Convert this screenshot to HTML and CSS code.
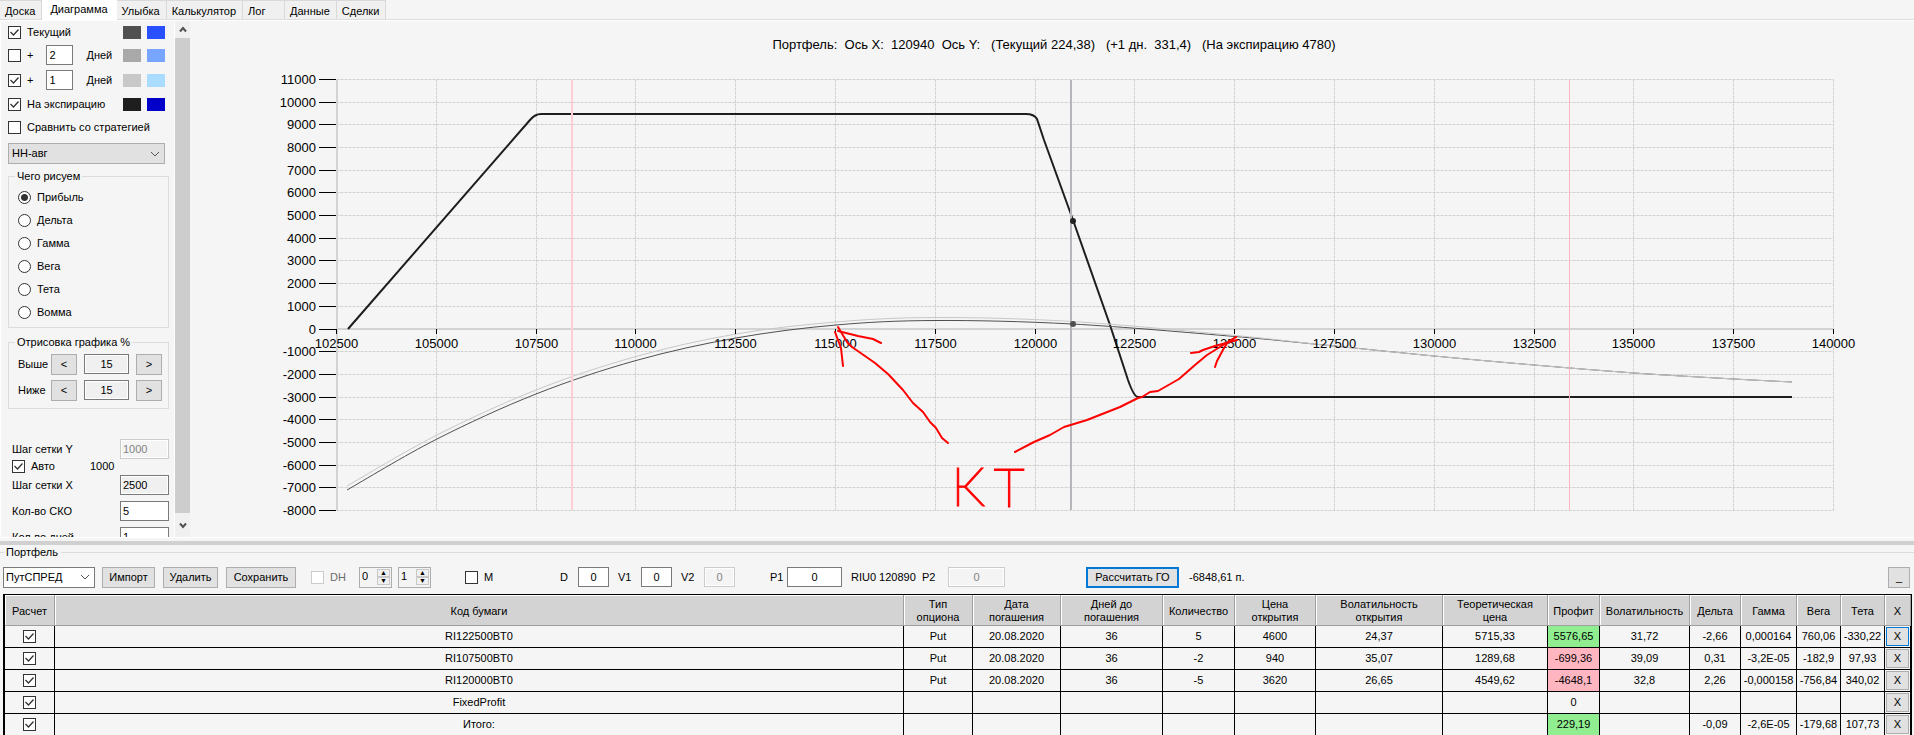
FILE: index.html
```html
<!DOCTYPE html>
<html lang="ru">
<head>
    <meta charset="UTF-8">
    <meta name="viewport" content="width=device-width, initial-scale=1.0">
    <title>Портфель опционов</title>
    <link rel="stylesheet" href="styles.css">
</head>
<body>
    <nav class="tabs">
        <button class="tab">Доска</button>
        <button class="tab active">Диаграмма</button>
        <button class="tab">Улыбка</button>
        <button class="tab">Калькулятор</button>
        <button class="tab tab-log">Лог</button>
        <button class="tab">Данные</button>
        <button class="tab">Сделки</button>
    </nav>

    <main class="workspace">
        <aside class="sidebar">
            <div class="line-row">
                <label><input type="checkbox" checked>Текущий</label>
                <span class="swatch dark1"></span><span class="swatch blue1"></span>
            </div>
            <div class="line-row tall">
                <label><input type="checkbox">+</label>
                <input type="text" class="days" id="days1" value="2">
                <label for="days1">Дней</label>
                <span class="swatch dark2"></span><span class="swatch blue2"></span>
            </div>
            <div class="line-row tall">
                <label><input type="checkbox" checked>+</label>
                <input type="text" class="days" id="days2" value="1">
                <label for="days2">Дней</label>
                <span class="swatch dark3"></span><span class="swatch blue3"></span>
            </div>
            <div class="line-row">
                <label><input type="checkbox" checked>На экспирацию</label>
                <span class="swatch dark4"></span><span class="swatch blue4"></span>
            </div>
            <div class="line-row">
                <label><input type="checkbox">Сравнить со стратегией</label>
            </div>
            <select class="strategy" aria-label="Стратегия"><option>НН-авг</option></select>

            <fieldset class="group">
                <legend>Чего рисуем</legend>
                <label class="radio-row"><input type="radio" name="what" checked>Прибыль</label>
                <label class="radio-row"><input type="radio" name="what">Дельта</label>
                <label class="radio-row"><input type="radio" name="what">Гамма</label>
                <label class="radio-row"><input type="radio" name="what">Вега</label>
                <label class="radio-row"><input type="radio" name="what">Тета</label>
                <label class="radio-row"><input type="radio" name="what">Вомма</label>
            </fieldset>

            <fieldset class="group range">
                <legend>Отрисовка графика %</legend>
                <div class="range-row">
                    <label for="above">Выше</label>
                    <button>&lt;</button><input type="text" id="above" value="15" readonly><button>&gt;</button>
                </div>
                <div class="range-row">
                    <label for="below">Ниже</label>
                    <button>&lt;</button><input type="text" id="below" value="15" readonly><button>&gt;</button>
                </div>
            </fieldset>

            <div class="steps">
                <label for="stepY">Шаг сетки Y</label><input type="text" id="stepY" value="1000" disabled>
                <label class="auto"><input type="checkbox" checked>Авто</label><span class="auto-value">1000</span>
                <label for="stepX">Шаг сетки X</label><input type="text" id="stepX" value="2500" readonly>
                <label for="sko">Кол-во СКО</label><input type="text" id="sko" value="5">
                <label for="dayCount">Кол-во дней</label><input type="text" id="dayCount" value="1">
            </div>
        </aside>

        <div class="scrollbar">
            <button aria-label="Вверх"><svg width="8" height="7" viewBox="0 0 8 7"><path d="M1 5.500l3-3.500 3 3.500"/></svg></button>
            <div class="thumb"></div>
            <button aria-label="Вниз"><svg width="8" height="7" viewBox="0 0 8 7"><path d="M1 1.500l3 3.500 3-3.500"/></svg></button>
        </div>

        <svg class="chart" viewBox="190 21 1724 516" preserveAspectRatio="xMidYMid meet">
            <text class="title" x="1054" y="49" text-anchor="middle">Портфель:&#160; Ось X:&#160; 120940&#160; Ось Y:&#160;&#160; (Текущий 224,38)&#160;&#160; (+1 дн.&#160; 331,4)&#160;&#160; (На экспирацию 4780)</text>
            <g id="grid"></g>
            <path class="expiry" d="M348 329L530 120Q535 114 541 114H1026Q1034 114 1037 119L1044 140L1073 220L1110 325L1128 380Q1134 397 1138 397H1792"/>
            <path class="current" id="current"/>
            <path class="plus" id="plus"/>
            <path class="sigma wide" d="M572 80V510"/>
            <path class="sigma" d="M1569.500 80V510"/>
            <path class="cursor" d="M1071 80V510"/>
            <circle class="dot" cx="1073" cy="221" r="3"/>
            <circle class="dot grey" cx="1073" cy="324" r="3"/>
            <g id="labels"></g>
            <!-- pencil marks -->
            <g class="pencil">
                <path d="M948 443L942 438L936 428L930 422L923 412L913 403L903 390L888 374L875 363L852 347L847 342L838 327"/>
                <path d="M843 366L841 348L838 340L835 332M838 331L858 336L873 339L881 343"/>
                <path d="M1015 452L1034 442L1050 435L1064 427L1087 420L1120 407L1138 398L1142 397L1150 392L1158 391L1179 379L1195 365L1207 355L1236 337"/>
                <path d="M1191 353L1199 352L1203 350L1215 346L1237 340M1215 367L1217 361L1224 348L1228 342L1236 337"/>
            </g>
            <text class="note" x="952" y="506">К</text>
            <text class="note" x="993" y="507">Т</text>
        </svg>
    </main>

    <section class="portfolio">
        <div class="caption"><span>Портфель</span></div>
        <div class="toolbar">
            <select class="portfolio-name" aria-label="Портфель"><option>ПутСПРЕД</option></select>
            <button class="btn import">Импорт</button>
            <button class="btn remove">Удалить</button>
            <button class="btn save">Сохранить</button>
            <label class="dh"><input type="checkbox" disabled>DH</label>
            <span class="spin"><input type="text" value="0" aria-label="DH от"><span><button aria-label="Больше">▲</button><button aria-label="Меньше">▼</button></span></span>
            <span class="spin"><input type="text" value="1" aria-label="DH до"><span><button aria-label="Больше">▲</button><button aria-label="Меньше">▼</button></span></span>
            <label class="m"><input type="checkbox">M</label>
            <label class="field first">D<input type="text" value="0"></label>
            <label class="field">V1<input type="text" value="0"></label>
            <label class="field">V2<input type="text" value="0" disabled></label>
            <label class="field price">P1<input type="text" value="0"></label>
            <span class="ticker">RIU0 120890</span>
            <label class="field price second">P2<input type="text" value="0" disabled></label>
            <button class="btn calc">Рассчитать ГО</button>
            <span class="margin">-6848,61 п.</span>
            <button class="btn collapse">_</button>
        </div>

        <table class="positions">
            <colgroup>
                <col class="w-calc"><col><col class="w-type"><col class="w-date"><col class="w-days"><col class="w-qty">
                <col class="w-open"><col class="w-vol-open"><col class="w-theo"><col class="w-profit"><col class="w-vol">
                <col class="w-delta"><col class="w-gamma"><col class="w-greek"><col class="w-greek"><col class="w-x">
            </colgroup>
            <thead>
                <tr>
                    <th>Расчет</th><th>Код бумаги</th><th>Тип<br>опциона</th><th>Дата<br>погашения</th>
                    <th>Дней до<br>погашения</th><th>Количество</th><th>Цена<br>открытия</th><th>Волатильность<br>открытия</th>
                    <th>Теоретическая<br>цена</th><th>Профит</th><th>Волатильность</th><th>Дельта</th>
                    <th>Гамма</th><th>Вега</th><th>Тета</th><th>X</th>
                </tr>
            </thead>
            <tbody>
                <tr>
                    <td><input type="checkbox" checked aria-label="RI122500BT0"></td><td>RI122500BT0</td><td>Put</td><td>20.08.2020</td>
                    <td>36</td><td>5</td><td>4600</td><td>24,37</td><td>5715,33</td><td class="up">5576,65</td><td>31,72</td>
                    <td>-2,66</td><td>0,000164</td><td>760,06</td><td>-330,22</td><td><button class="del focused">X</button></td>
                </tr>
                <tr>
                    <td><input type="checkbox" checked aria-label="RI107500BT0"></td><td>RI107500BT0</td><td>Put</td><td>20.08.2020</td>
                    <td>36</td><td>-2</td><td>940</td><td>35,07</td><td>1289,68</td><td class="down">-699,36</td><td>39,09</td>
                    <td>0,31</td><td>-3,2E-05</td><td>-182,9</td><td>97,93</td><td><button class="del">X</button></td>
                </tr>
                <tr>
                    <td><input type="checkbox" checked aria-label="RI120000BT0"></td><td>RI120000BT0</td><td>Put</td><td>20.08.2020</td>
                    <td>36</td><td>-5</td><td>3620</td><td>26,65</td><td>4549,62</td><td class="down">-4648,1</td><td>32,8</td>
                    <td>2,26</td><td>-0,000158</td><td>-756,84</td><td>340,02</td><td><button class="del">X</button></td>
                </tr>
                <tr>
                    <td><input type="checkbox" checked aria-label="FixedProfit"></td><td>FixedProfit</td><td></td><td></td>
                    <td></td><td></td><td></td><td></td><td></td><td>0</td><td></td>
                    <td></td><td></td><td></td><td></td><td><button class="del">X</button></td>
                </tr>
                <tr>
                    <td><input type="checkbox" checked aria-label="Итого"></td><td>Итого:</td><td></td><td></td>
                    <td></td><td></td><td></td><td></td><td></td><td class="up">229,19</td><td></td>
                    <td>-0,09</td><td>-2,6E-05</td><td>-179,68</td><td>107,73</td><td><button class="del">X</button></td>
                </tr>
            </tbody>
        </table>
    </section>

    <script>
        const left = 336.5, right = 1833.5, top_ = 79.5, bottom = 510.5;
        const xMin = 102500, xMax = 140000, yMin = -8000, yMax = 11000;

        function px(x) {
            return Math.floor(left + (x - xMin) / (xMax - xMin) * (right - left)) + 0.5;
        }
        function py(y) {
            return Math.floor(top_ + (yMax - y) / (yMax - yMin) * (bottom - top_)) + 0.5;
        }

        let grid = '';
        let labels = '';
        for (let y = yMin; y <= yMax; y += 1000) {
            if (y !== 0) grid += `<path class="grid" d="M${left} ${py(y)}H${right}"/>`;
            grid += `<path class="tick" d="M319 ${py(y)}H336"/>`;
            labels += `<text class="axis-label" x="316" y="${py(y) + 4}" text-anchor="end">${y}</text>`;
        }
        for (let x = xMin; x <= xMax; x += 2500) {
            if (x !== xMin) grid += `<path class="grid" d="M${px(x)} ${top_}V${bottom}"/>`;
            labels += `<path class="tick" d="M${px(x)} 329V334"/>`;
            labels += `<text class="axis-label" x="${px(x)}" y="348" text-anchor="middle">${x}</text>`;
        }
        grid += `<path class="axis" d="M337 ${top_}V${bottom}M336 329H${right}"/>`;
        document.getElementById('grid').innerHTML = grid;
        document.getElementById('labels').innerHTML = labels;

        // smooth line through the points
        function curve(p) {
            let d = `M${p[0]}`;
            for (let i = 0; i < p.length - 1; i++) {
                const a = p[i - 1] || p[i], b = p[i], c = p[i + 1], e = p[i + 2] || c;
                d += `C${b[0] + (c[0] - a[0]) / 6} ${b[1] + (c[1] - a[1]) / 6} ${c[0] - (e[0] - b[0]) / 6} ${c[1] - (e[1] - b[1]) / 6} ${c}`;
            }
            return d;
        }
        const tail = [[1324, 345], [1434, 356], [1534, 365], [1634, 373], [1734, 379], [1792, 382]];
        document.getElementById('current').setAttribute('d', curve([[347, 490], [436, 439.5], [536, 394], [636, 360.5],
            [736, 338], [836, 325], [936, 320.5], [1072, 324], [1235, 336.5], ...tail]));
        document.getElementById('plus').setAttribute('d', curve([[347, 486], [436, 435.5], [536, 390], [636, 356.5],
            [736, 334], [836, 322], [936, 317.5], [1072, 321.5], [1235, 335.5], ...tail]));
    </script>
</body>
</html>
```
FILE: styles.css
```css
* {
    box-sizing: border-box;
}
body {
    margin: 0;
    height: 100vh;
    display: flex;
    flex-direction: column;
    overflow: hidden;
    background: #f5f5f5;
    color: #000;
    font: 11px/13px "Liberation Sans", Arial, sans-serif;
}
input, button, select {
    margin: 0;
    font: inherit;
    color: inherit;
    border-radius: 0;
}

/* tabs */
.tabs {
    display: flex;
    align-items: flex-end;
    height: 20px;
    flex: none;
    background: #f5f5f5;
    border-bottom: 1px solid #dcdcdc;
}
.tab {
    height: 19px;
    padding: 2px 6px 0 5px;
    border: 1px solid #d9d9d9;
    border-left: 0;
    border-bottom: 0;
    background: #f0f0f0;
    text-align: left;
}
.tab.active {
    height: 20px;
    padding: 0 8px 2px;
    margin-bottom: -1px;
    background: #fff;
    border-color: #fff;
}
.tab-log {
    width: 42px;
}

/* upper part */
.workspace {
    flex: 1;
    min-height: 0;
    display: flex;
    border-top: 1px solid #fff;
    border-left: 1px solid #fff;
    border-bottom: 1px solid #fff;
}
.sidebar {
    width: 174px;
    flex: none;
    padding: 0 9px 0 7px;
    overflow: hidden;
    border-right: 1px solid #fff;
}
input[type="checkbox"], input[type="radio"] {
    appearance: none;
    flex: none;
    width: 13px;
    height: 13px;
    border: 1px solid #333;
    background: #fff;
}
input[type="checkbox"]:checked {
    background: #fff url("data:image/svg+xml,%3Csvg xmlns='http://www.w3.org/2000/svg' viewBox='0 0 11 11'%3E%3Cpath d='M1.500 5l3 3 5-5.500' fill='none' stroke='%23333' stroke-width='1.300'/%3E%3C/svg%3E");
}
input[type="checkbox"]:disabled {
    border-color: #ccc;
}
input[type="radio"] {
    border-radius: 50%;
}
input[type="radio"]:checked {
    background: radial-gradient(circle, #333 3px, #fff 4px);
}
input[type="text"] {
    height: 20px;
    min-width: 0;
    padding: 0 2px;
    border: 1px solid #7a7a7a;
    background: #fff;
}
input[type="text"]:read-only {
    background: #f0f0f0;
    box-shadow: inset 0 0 0 1px #fff;
}
input[type="text"]:disabled {
    background: #f4f4f4;
    border-color: #ccc;
    color: #838383;
    box-shadow: inset 0 0 0 1px #fff;
}
select {
    appearance: none;
    height: 21px;
    padding: 0 3px;
    background: #e1e1e1 url("data:image/svg+xml,%3Csvg xmlns='http://www.w3.org/2000/svg' width='10' height='6'%3E%3Cpath d='M1 1l4 4 4-4' fill='none' stroke='%23555'/%3E%3C/svg%3E") no-repeat right 4px center;
    border: 1px solid #adadad;
}
label {
    display: flex;
    align-items: center;
    gap: 6px;
}
.line-row {
    display: flex;
    align-items: center;
    height: 23px;
}
.line-row:first-child {
    height: 22px;
}
.line-row.tall {
    height: 26px;
}
.line-row.tall:nth-child(2) {
    height: 24px;
}
.line-row .days {
    width: 27px;
    margin: 0 13px 0 13px;
}
.swatch {
    width: 18px;
    height: 13px;
    margin-left: 6px;
}
.line-row label + .swatch {
    margin-left: auto;
}
.dark1 { background: #505050; }
.dark2 { background: #a9a9a9; }
.dark3 { background: #c8c8c8; }
.dark4 { background: #1e1e1e; }
.blue1 { background: #2850ff; }
.blue2 { background: #78a5ff; }
.blue3 { background: #aadcff; }
.blue4 { background: #0000c8; }
.strategy {
    width: 100%;
    margin-top: 4px;
}
.group {
    margin: 6px -4px 0 0;
    padding: 3px 9px 3px;
    border: 1px solid #dcdcdc;
}
.group legend {
    margin-left: -3px;
    padding: 0 2px;
}
.radio-row {
    height: 23px;
}
.range {
    margin-top: 8px;
    padding: 2px 6px 5px 9px;
}
.range-row {
    display: flex;
    align-items: center;
    height: 26px;
}
.range-row label {
    width: 33px;
}
.range-row button {
    width: 26px;
    height: 21px;
    padding: 0;
    background: #e1e1e1;
    border: 1px solid #adadad;
}
.range-row input {
    width: 45px;
    margin: 0 7px;
    text-align: center;
}
.steps {
    display: grid;
    grid-template-columns: 1fr 49px;
    align-items: center;
    margin: 30px -4px 0 4px;
}
.steps input[type="text"] {
    margin-bottom: 6px;
}
.steps > label {
    margin-bottom: 6px;
}
.steps #stepY {
    margin-bottom: 1px;
}
.steps > label:first-child {
    margin-bottom: 0;
}
.steps > .auto, .auto-value {
    margin-bottom: 2px;
}
.auto-value {
    margin-left: -30px;
}

.scrollbar {
    width: 15px;
    flex: none;
    display: flex;
    flex-direction: column;
    background: #f0f0f0;
}
.scrollbar button {
    height: 17px;
    padding: 0;
    border: 0;
    background: none;
}
.scrollbar button:last-child {
    height: 24px;
}
.scrollbar path {
    fill: none;
    stroke: #505050;
    stroke-width: 2;
}
.thumb {
    flex: 1;
    background: #cdcdcd;
}

/* chart */
.chart {
    flex: 1;
    min-width: 0;
    height: 100%;
}
.chart path {
    fill: none;
}
.title, .axis-label {
    font-size: 13px;
}
.grid {
    stroke: #d0d0d0;
    stroke-dasharray: 3 1;
}
.axis {
    stroke: #d3d3d3;
    stroke-width: 2;
}
.tick {
    stroke: #000;
}
.expiry {
    stroke: #1e1e1e;
    stroke-width: 2;
}
.current {
    stroke: #505050;
}
.plus {
    stroke: #c8c8c8;
}
.sigma {
    stroke: #ffb6c1;
}
.sigma.wide {
    stroke: #fccfd5;
    stroke-width: 2;
}
.cursor {
    stroke: #b4b6b9;
    stroke-width: 2;
}
.dot {
    fill: #222;
}
.dot.grey {
    fill: #505050;
}
.pencil {
    stroke: #f00;
    stroke-width: 2;
    stroke-linecap: round;
    stroke-linejoin: round;
}
.note {
    fill: #f00;
    stroke: #f00;
    font: 100 54px Roboto, "Liberation Sans", sans-serif;
}

/* portfolio */
.portfolio {
    flex: none;
    padding: 0 2px 0 3px;
    margin-bottom: -1px;
    border-top: 4px solid #d0d0d0;
}
.workspace + .portfolio {
    margin-top: 3px;
}
.caption {
    display: flex;
    align-items: center;
    height: 14px;
    margin: 0 -2px 0 -3px;
}
.caption::before, .caption::after {
    content: "";
    width: 4px;
    height: 1px;
    background: #dcdcdc;
}
.caption::after {
    flex: 1;
}
.caption span {
    padding: 0 3px 0 2px;
}
.toolbar {
    display: flex;
    align-items: center;
    height: 35px;
    padding-top: 1px;
}
.portfolio-name {
    width: 92px;
    padding: 0 2px;
    background-color: #fff;
    border-color: #7a7a7a;
}
.btn {
    height: 21px;
    padding: 0;
    background: #e1e1e1;
    border: 1px solid #adadad;
}
.import {
    width: 53px;
    margin-left: 7px;
}
.remove {
    width: 55px;
    margin-left: 8px;
}
.save {
    width: 70px;
    margin-left: 8px;
}
.dh {
    width: 48px;
    margin-left: 15px;
    color: #6d6d6d;
}
.spin {
    display: flex;
    width: 33px;
    height: 21px;
    margin-right: 6px;
    padding: 1px;
    border: 1px solid #adadad;
    background: #f4f4f4;
}
.spin input[type="text"] {
    width: 16px;
    height: 15px;
    padding: 0 1px;
    border: 0;
    background: none;
}
.spin span {
    width: 13px;
}
.spin button {
    display: block;
    width: 13px;
    height: 8px;
    padding: 0;
    border: 1px solid #c8c8c8;
    background: #f0f0f0;
    font-size: 7px;
    line-height: 6px;
}
.m {
    width: 67px;
    margin-left: 28px;
}
.field {
    gap: 0;
    justify-content: space-between;
    width: 54px;
    margin-left: 9px;
}
.field.first {
    width: 49px;
    margin-left: 28px;
}
.field input {
    width: 31px;
    text-align: center;
}
.field.price {
    width: 72px;
    margin-left: 35px;
}
.field.price input {
    width: 55px;
}
.ticker {
    margin-left: 9px;
    width: 64px;
    white-space: nowrap;
}
.field.price.second {
    width: 83px;
    margin-left: 7px;
}
.field.second input {
    width: 57px;
}
.calc {
    width: 93px;
    margin-left: 81px;
    border: 2px solid #0078d7;
}
.margin {
    margin-left: 10px;
}
.collapse {
    width: 22px;
    margin-left: auto;
    margin-right: 2px;
}

.positions {
    width: 100%;
    table-layout: fixed;
    border-collapse: separate;
    border-spacing: 0;
    border: 1px solid #000;
    border-width: 1px 1px 0 2px;
    text-align: center;
}
.positions th {
    height: 31px;
    padding: 2px 0 0;
    font-weight: normal;
    background: #d3d3d3;
    border-right: 1px solid #a0a0a0;
    border-bottom: 1px solid #a0a0a0;
    box-shadow: inset 1px 1px #fff;
}
.positions td {
    height: 22px;
    padding: 0;
    border-right: 1px solid #000;
    border-bottom: 1px solid #000;
}
.positions input {
    display: block;
    margin: auto;
}
.positions td.up {
    background: #90ee90;
}
.positions td.down {
    background: #ffb6c1;
}
.del {
    display: block;
    width: 23px;
    height: 19px;
    margin: auto;
    padding: 0;
    background: #e1e1e1;
    border: 1px solid #adadad;
}
.del.focused {
    border-color: #0078d7;
}
.w-calc { width: 50px; }
.w-type { width: 69px; }
.w-date { width: 88px; }
.w-days { width: 102px; }
.w-qty { width: 72px; }
.w-open { width: 81px; }
.w-vol-open { width: 127px; }
.w-theo { width: 105px; }
.w-profit { width: 52px; }
.w-vol { width: 90px; }
.w-delta { width: 51px; }
.w-gamma { width: 56px; }
.w-greek { width: 44px; }
.w-x { width: 26px; }
```
